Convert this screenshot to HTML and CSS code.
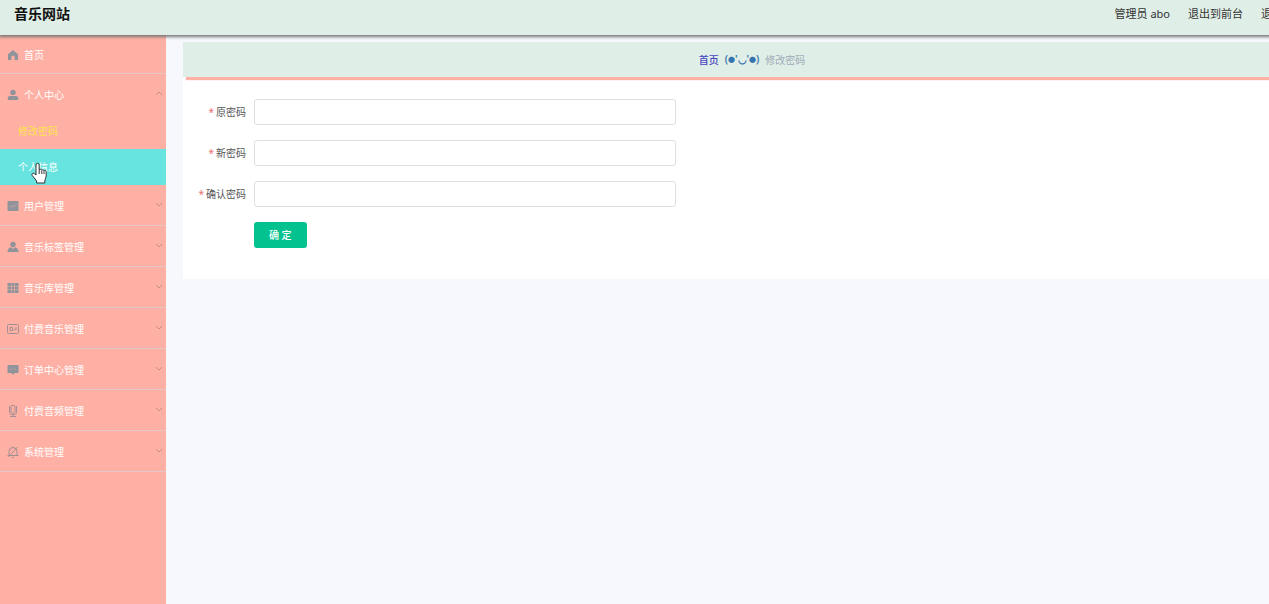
FILE: index.html
```html
<!DOCTYPE html>
<html lang="zh-CN">
<head>
    <meta charset="UTF-8">
    <meta name="viewport" content="width=device-width, initial-scale=1.0">
    <title>音乐网站</title>
    <link rel="stylesheet" href="styles.css">
</head>
<body>
    <div class="app">
        <header class="navbar">
            <h1 class="title">音乐网站</h1>
            <nav class="user-nav">
                <span>管理员 abo</span>
                <a href="#">退出到前台</a>
                <a href="#">退出登录</a>
            </nav>
        </header>

        <div class="body">
            <aside class="sidebar">
                <ul class="menu">
                    <li class="menu-item menu-home">
                        <a href="#">
                            <svg class="icon" viewBox="0 0 12 12"><path d="M6 1 1 5.2V11h3.4V8a1.6 1.6 0 0 1 3.2 0v3H11V5.2z"/></svg>
                            首页
                        </a>
                    </li>
                    <li class="menu-item menu-open">
                        <a href="#">
                            <svg class="icon" viewBox="0 0 12 12"><circle cx="6" cy="3.4" r="2.7"/><path d="M.8 11V9.2c0-1.3.9-2.2 2.2-2.2h6c1.3 0 2.2.9 2.2 2.2V11z"/></svg>
                            个人中心
                            <svg class="arrow" viewBox="0 0 8 5"><path d="M1 4l3-3 3 3"/></svg>
                        </a>
                        <ul class="submenu">
                            <li><a class="active" href="#">修改密码</a></li>
                            <li>
                                <a class="hover" href="#">个人信息</a>
                                <svg class="pointer" viewBox="0 0 16 22"><path d="M5 13V3a1.6 1.6 0 0 1 3.2 0v5c.4-1.2 2.4-1 2.6.3.6-.9 2-.6 2.2.5.8-.7 2.2-.2 2.2 1.1V14c0 2-1.4 3-1.4 5v2H5.6v-2L1.2 13.4C.2 12 2 10.6 3.3 11.6z"/><path d="M8.2 8v4M10.8 8.6V12M13 9.2V12"/></svg>
                            </li>
                        </ul>
                    </li>
                    <li class="menu-item">
                        <a href="#">
                            <svg class="icon" viewBox="0 0 12 12"><rect x=".5" y="1" width="11" height="10" rx="1"/><path class="cut" d="M2.5 7.5l2-2 2 1.5 3-3"/></svg>
                            用户管理
                            <svg class="arrow" viewBox="0 0 8 5"><path d="M1 1l3 3 3-3"/></svg>
                        </a>
                    </li>
                    <li class="menu-item">
                        <a href="#">
                            <svg class="icon" viewBox="0 0 12 12"><circle cx="6" cy="3.5" r="2.7"/><path d="M.5 11c0-2.5 1.5-4.2 3.5-4.7l2 1.7 2-1.7c2 .5 3.5 2.2 3.5 4.7z"/></svg>
                            音乐标签管理
                            <svg class="arrow" viewBox="0 0 8 5"><path d="M1 1l3 3 3-3"/></svg>
                        </a>
                    </li>
                    <li class="menu-item">
                        <a href="#">
                            <svg class="icon" viewBox="0 0 12 12"><path d="M.5 1H4v3H.5zM4.5 1h3v3h-3zM8 1h3.5v3H8zM.5 4.6H4v2.9H.5zM4.5 4.6h3v2.9h-3zM8 4.6h3.5v2.9H8zM.5 8.1H4V11H.5zM4.5 8.1h3V11h-3zM8 8.1h3.5V11H8z"/></svg>
                            音乐库管理
                            <svg class="arrow" viewBox="0 0 8 5"><path d="M1 1l3 3 3-3"/></svg>
                        </a>
                    </li>
                    <li class="menu-item">
                        <a href="#">
                            <svg class="icon line" viewBox="0 0 12 12"><rect x=".5" y="1.5" width="11" height="9" rx="1"/><path d="M3 4.5v3h2.5v-3zM7 7.5l1-1.5 1 1V4"/></svg>
                            付费音乐管理
                            <svg class="arrow" viewBox="0 0 8 5"><path d="M1 1l3 3 3-3"/></svg>
                        </a>
                    </li>
                    <li class="menu-item">
                        <a href="#">
                            <svg class="icon" viewBox="0 0 12 12"><path d="M.5 1h11v8H7.5L6 11 4.5 9h-4z"/><path class="cut" d="M3 5h1M5.5 5h1M8 5h1"/></svg>
                            订单中心管理
                            <svg class="arrow" viewBox="0 0 8 5"><path d="M1 1l3 3 3-3"/></svg>
                        </a>
                    </li>
                    <li class="menu-item">
                        <a href="#">
                            <svg class="icon line" viewBox="0 0 12 12"><rect x="4" y=".5" width="4" height="7.5" rx="1"/><path d="M2.5 1v6.5c0 1 .8 2 2 2h3c1.200 0 2-1 2-2V1M6 9.500v2M3 11.500h6"/></svg>
                            付费音频管理
                            <svg class="arrow" viewBox="0 0 8 5"><path d="M1 1l3 3 3-3"/></svg>
                        </a>
                    </li>
                    <li class="menu-item">
                        <a href="#">
                            <svg class="icon line" viewBox="0 0 12 12"><path d="M2 9.5V5.5a4 4 0 0 1 8 0v4M.5 9.5h11M5 11.3h2M6 .5v1M1.5 11l9-10"/></svg>
                            系统管理
                            <svg class="arrow" viewBox="0 0 8 5"><path d="M1 1l3 3 3-3"/></svg>
                        </a>
                    </li>
                </ul>
            </aside>

            <main class="main">
                <nav class="breadcrumb">
                    <a href="#">首页</a>
                    <span class="separator">(<span class="dot">●</span>'◡'<span class="dot">●</span>)</span>
                    <span class="current">修改密码</span>
                </nav>
                <form class="card">
                    <div class="form-item">
                        <label for="oldPassword">原密码</label>
                        <input type="password" id="oldPassword">
                    </div>
                    <div class="form-item">
                        <label for="newPassword">新密码</label>
                        <input type="password" id="newPassword">
                    </div>
                    <div class="form-item">
                        <label for="confirmPassword">确认密码</label>
                        <input type="password" id="confirmPassword">
                    </div>
                    <button class="btn-submit" type="submit">确 定</button>
                </form>
            </main>
        </div>
    </div>
</body>
</html>
```
FILE: styles.css
```css
:root {
    --mint: #dfeee6;
    --salmon: #ffb0a5;
    --hover: #68e4e0;
    --green: #04c190;
    --background: #f7f8fd;
}
* {
    box-sizing: border-box;
}
body {
    margin: 0;
    overflow: hidden;
    font-family: "Noto Sans", "Noto Sans CJK SC", sans-serif;
    font-size: 10px;
    line-height: 16px;
    background-color: var(--background);
}
a {
    color: inherit;
    text-decoration: none;
}
ul {
    list-style: none;
    margin: 0;
    padding: 0;
}
/* the admin layout is a little wider than the window */
.app {
    display: flex;
    flex-direction: column;
    width: calc(100% + 68px);
    min-height: 100vh;
}
.navbar {
    position: relative;
    z-index: 2;
    display: flex;
    justify-content: space-between;
    height: 35px;
    padding: 4px 32px 0 14px;
    background-color: var(--mint);
    box-shadow: 0 1px 3px 1px #777;
}
.title {
    margin: 0;
    font-size: 14px;
    line-height: 20px;
    color: #111;
}
.user-nav {
    display: flex;
    gap: 18px;
    font-size: 11px;
    line-height: 20px;
    color: #333;
}
.body {
    display: flex;
    flex: 1;
}
.sidebar {
    width: 166px;
    background-color: var(--salmon);
    color: #fff;
}
.menu-item {
    border-bottom: 1px solid #e6c6c6;
}
.menu-item > a {
    display: flex;
    align-items: center;
    gap: 5px;
    height: 40px;
    padding: 2px 3px 0 7px;
}
.menu-home > a,
.menu-open > a {
    height: 38px;
}
.menu-open {
    border-bottom: 0;
    padding-top: 1px;
}
.icon {
    width: 12px;
    height: 12px;
    fill: #909399;
}
.icon.line {
    fill: none;
    stroke: #a58f92;
}
.icon .cut {
    fill: none;
    stroke: #c9a5a3;
}
.arrow {
    width: 8px;
    height: 5px;
    margin: 0 0 3px auto;
    fill: none;
    stroke: #c98d88;
}
.submenu li {
    position: relative;
}
.submenu a {
    display: block;
    padding: 10px 18px;
}
.submenu .active {
    color: #ffe34d;
}
.submenu .hover {
    background-color: var(--hover);
}
.pointer {
    position: absolute;
    left: 31px;
    top: 13px;
    width: 16px;
    height: 22px;
    fill: #fff;
    stroke: #333;
}
.main {
    flex: 1;
    padding: 7px 16px 0 17px;
}
.breadcrumb {
    position: relative;
    display: flex;
    justify-content: center;
    align-items: center;
    gap: 6px;
    height: 35px;
    background-color: var(--mint);
    box-shadow: 3px 3px 1px var(--salmon);
}
.breadcrumb a {
    color: #4845c4;
    font-weight: 500;
}
.separator {
    color: #3674ad;
    font-weight: 600;
}
.dot {
    font-size: 7px;
    vertical-align: 1px;
}
.current {
    color: #a0abb9;
}
.card {
    padding: 22px 0 31px;
    background-color: #fff;
}
.form-item {
    display: flex;
    align-items: center;
    gap: 8px;
    margin-bottom: 15px;
}
.form-item label {
    width: 63px;
    text-align: right;
    color: #555;
}
.form-item label::before {
    content: "*";
    margin-right: 2px;
    color: #e87070;
}
.form-item input {
    flex: 1;
    max-width: 422px;
    height: 26px;
    padding: 0 10px;
    border: 1px solid #dddfe3;
    border-radius: 3px;
    font: inherit;
}
.btn-submit {
    display: block;
    height: 26px;
    margin-left: 71px;
    padding: 0 15px;
    border: 0;
    border-radius: 3px;
    background-color: var(--green);
    color: #fff;
    font: inherit;
    font-weight: 500;
    cursor: pointer;
}
```
